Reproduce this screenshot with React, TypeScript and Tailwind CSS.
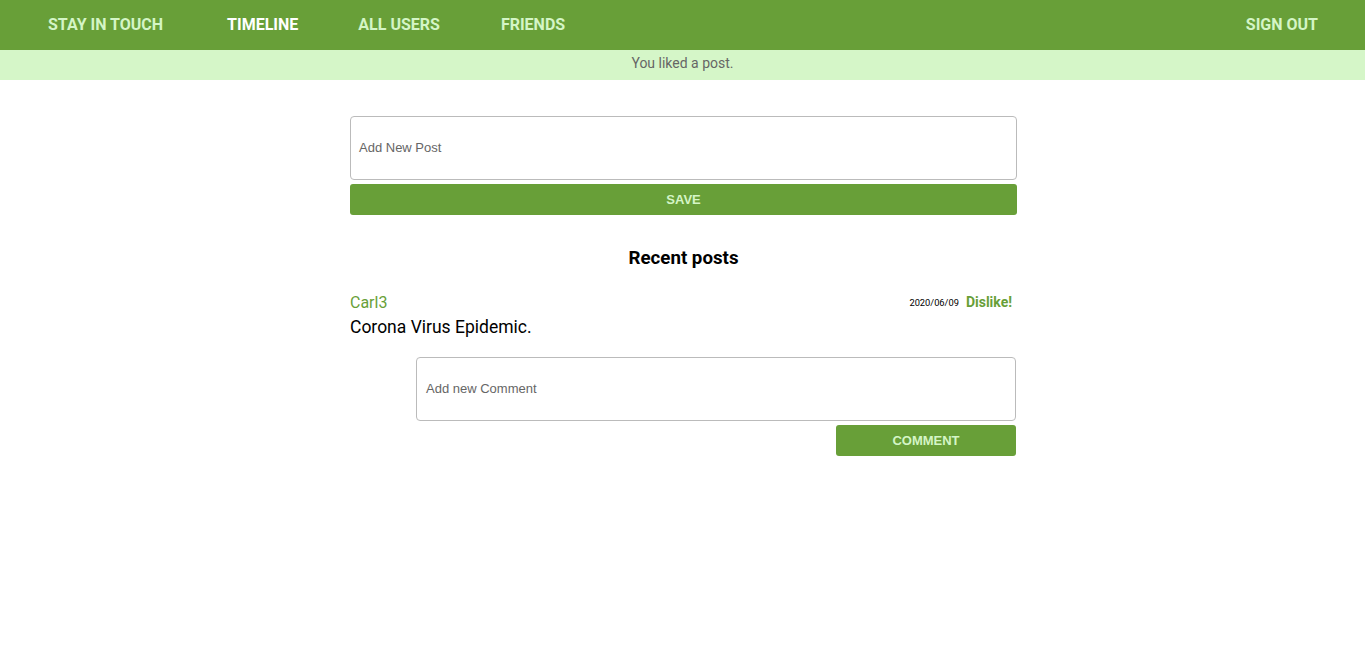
import React from "react";

export default function App() {
  return (
    <div className="min-h-screen bg-white" style={{ fontFamily: "Roboto, 'Liberation Sans', sans-serif" }}>
      <nav className="h-[50px] bg-[#689f38] flex items-center justify-between pl-[48px] pr-[47px]">
        <div className="flex items-center text-[16px] font-bold text-[#d4f5c6]">
          <span>STAY IN TOUCH</span>
          <span className="ml-[64px] text-white">TIMELINE</span>
          <span className="ml-[60px]">ALL USERS</span>
          <span className="ml-[61px]">FRIENDS</span>
        </div>
        <span className="text-[16px] font-bold text-[#d4f5c6]">SIGN OUT</span>
      </nav>
      <div className="h-[30px] bg-[#d5f6c8] flex items-center justify-center pb-[4px] text-[14px] text-[#666]">
        You liked a post.
      </div>
      <div className="flex justify-center pl-[2px]">
        <main className="w-[667px] pt-[36px]" style={{ fontFamily: "'Liberation Sans', Arial, sans-serif" }}>
          <div className="h-[64px] border border-[#bbb] rounded-[4px] flex items-center px-[8px] text-[13px] text-[#666]">
            Add New Post
          </div>
          <button className="mt-[4px] w-full h-[31px] bg-[#689f38] rounded-[3px] text-[13px] font-bold text-[#d4f5c6]">
            SAVE
          </button>
          <h2 className="mt-[30px] h-[27px] leading-[27px] text-center text-[18.72px] font-bold text-black" style={{ fontFamily: "Roboto, sans-serif" }}>
            Recent posts
          </h2>
          <div className="mt-[20px]" style={{ fontFamily: "Roboto, sans-serif" }}>
            <div className="flex items-center justify-between">
              <span className="text-[16px] text-[#689f38] leading-[20px]">Carl3</span>
              <div className="flex items-center gap-[7px] pr-[5px]">
                <span className="text-[9.3px] text-black">2020/06/09</span>
                <span className="text-[14px] font-bold text-[#689f38]">Dislike!</span>
              </div>
            </div>
            <div className="text-[17.5px] text-black leading-[24px] mt-[2px]">Corona Virus Epidemic.</div>
          </div>
          <div className="ml-[66px] mr-[1px] mt-[18px] flex flex-col items-end" style={{ fontFamily: "'Liberation Sans', Arial, sans-serif" }}>
            <div className="w-full h-[64px] border border-[#bbb] rounded-[4px] flex items-center px-[9px] text-[13px] text-[#666]">
              Add new Comment
            </div>
            <button className="mt-[4px] w-[180px] h-[31px] bg-[#689f38] rounded-[3px] text-[13px] font-bold text-[#d4f5c6]">
              COMMENT
            </button>
          </div>
        </main>
      </div>
    </div>
  );
}
